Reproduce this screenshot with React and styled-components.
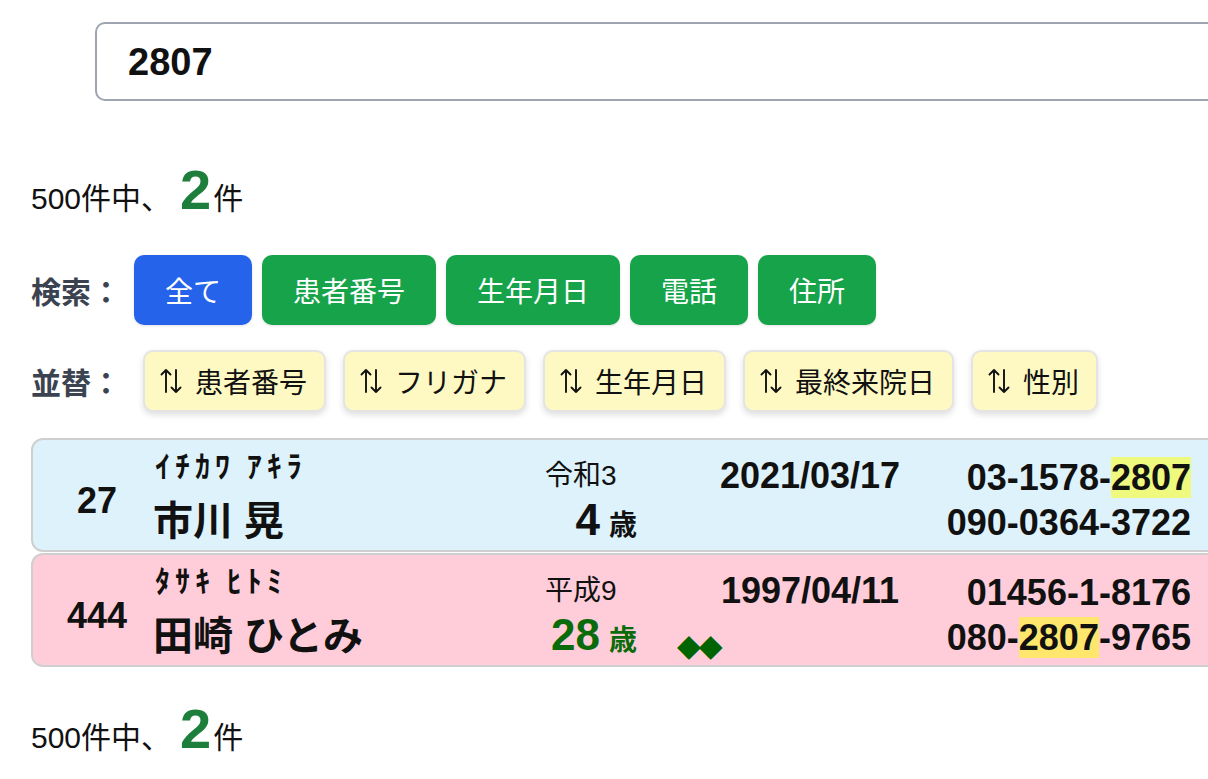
import React, { useEffect, useRef } from 'react';
import styled, { createGlobalStyle } from 'styled-components';

const GlobalStyle = createGlobalStyle`
  html, body { margin: 0; padding: 0; background: #fff; overflow: hidden; }
  body { font-family: "Liberation Sans", "Noto Sans CJK JP", sans-serif; color: #111; }
`;

const Page = styled.div`
  width: 100%;
  overflow: clip;
  box-sizing: border-box;
  padding: 22px 0 0 31px;
`;

const SearchField = styled.input`
  display: block;
  box-sizing: border-box;
  margin-left: 64px;
  width: 1150px;
  height: 79px;
  border: 2px solid #9ea4b0;
  border-radius: 10px;
  padding: 2px 0 0 31px;
  font: 700 38px "Liberation Sans", sans-serif;
  color: #111;
  outline: none;
  caret-color: #000;
  background: #fff;
`;

const Count = styled.div`
  display: flex;
  align-items: baseline;
  margin-top: ${(p) => p.$top}px;
  font-family: "Liberation Sans", "Noto Sans CJK JP", sans-serif;
  font-size: 30px;
  line-height: 56px;
  color: #111;
`;

const CountNum = styled.span`
  font-size: 56px;
  font-weight: 700;
  color: #1e7e3c;
  margin: 0 2px 0 9px;
`;

const FilterRow = styled.div`
  display: flex;
  align-items: center;
  gap: ${(p) => p.$gap}px;
  margin-top: ${(p) => p.$top}px;
`;

const RowLabel = styled.span`
  width: ${(p) => p.$width}px;
  flex: none;
  font: 700 30px/40px "Noto Sans CJK JP", sans-serif;
  color: #3b4250;
`;

const FilterButton = styled.button`
  flex: none;
  font: 400 28px/40px "Noto Sans CJK JP", sans-serif;
  color: #fff;
  background: ${(p) => (p.$active ? '#2563eb' : '#16a34a')};
  border: none;
  border-radius: 10px;
  padding: 15px 31px;
  box-shadow: 0 1px 3px rgba(0, 0, 0, 0.12);
  cursor: pointer;
`;

const SortButton = styled.button`
  flex: none;
  display: flex;
  align-items: center;
  gap: 13px;
  font: 400 28px/40px "Noto Sans CJK JP", sans-serif;
  color: #111;
  background: #fef9c3;
  border: 2px solid #e4e4e4;
  border-radius: 10px;
  padding: 9px 17px 9px 15px;
  box-shadow: 0 3px 6px rgba(0, 0, 0, 0.13);
  cursor: pointer;
`;

const CardList = styled.div`
  display: flex;
  flex-direction: column;
  gap: 1px;
  width: 1200px;
  margin-top: 26px;
`;

const Card = styled.div`
  display: grid;
  grid-template-columns: 112px 392px 95px 300px 251px;
  grid-template-rows: 48px 50px;
  padding: 8px 38px 4px 8px;
  border: 2px solid #cfcfcf;
  border-radius: 12px;
  background: ${(p) => (p.$tone === 'pink' ? '#ffcdd9' : '#ddf2fa')};
  color: #111;
`;

const PatientId = styled.div`
  grid-row: 1 / span 2;
  grid-column: 1;
  align-self: center;
  text-align: center;
  padding-top: 8px;
  font: 700 36px/40px "Liberation Sans", sans-serif;
`;

const Kana = styled.div`
  grid-row: 1;
  grid-column: 2;
  align-self: start;
  padding-left: 2px;
  margin-top: -3px;
  font: 700 30px/38px "Noto Sans CJK JP", sans-serif;
  letter-spacing: 5px;
`;

const Name = styled.div`
  grid-row: 2;
  grid-column: 2;
  align-self: center;
  font: 700 40px/50px "Liberation Sans", "Noto Sans CJK JP", sans-serif;
`;

const Era = styled.div`
  grid-row: 1;
  grid-column: 3;
  align-self: end;
  font: 400 28px/40px "Liberation Sans", "Noto Sans CJK JP", sans-serif;
`;

const Age = styled.div`
  grid-row: 2;
  grid-column: 3;
  align-self: center;
  text-align: right;
  padding: 8px 3px 0 0;
  color: ${(p) => p.$color};
  font-family: "Liberation Sans", "Noto Sans CJK JP", sans-serif;
  font-weight: 700;
  line-height: 50px;
`;

const AgeNum = styled.span`
  font-size: 44px;
`;

const AgeUnit = styled.span`
  font-size: 28px;
  margin-left: 9px;
`;

const BirthDate = styled.div`
  grid-row: 1;
  grid-column: 4;
  align-self: end;
  padding-left: 40px;
  text-align: center;
  font: 700 36px/40px "Liberation Sans", sans-serif;
`;

const Marks = styled.div`
  grid-row: 2;
  grid-column: 4;
  align-self: end;
  margin-bottom: -4px;
  padding-left: 37px;
  color: #006400;
  font: 400 31px/40px "DejaVu Sans", sans-serif;
  letter-spacing: -2px;
`;

const Phone = styled.div`
  grid-row: ${(p) => p.$row};
  grid-column: 5;
  align-self: ${(p) => (p.$row === 1 ? 'end' : 'center')};
  margin-bottom: ${(p) => (p.$row === 1 ? -3 : 0)}px;
  padding-top: ${(p) => (p.$row === 1 ? 0 : 3)}px;
  text-align: right;
  white-space: nowrap;
  font: 700 36px/42px "Liberation Sans", sans-serif;
`;

const Hit = styled.mark`
  background: rgba(255, 255, 0, 0.5);
  color: inherit;
  padding: 0;
`;

const SortIcon = () => (
  <svg width="22" height="26" viewBox="0 0 22 26" fill="none" stroke="#111" strokeWidth="1.9" strokeLinecap="round" strokeLinejoin="round">
    <path d="M6 24V2M1.5 6.5L6 2l4.5 4.5" />
    <path d="M16 2v22M11.5 19.5L16 24l4.5-4.5" />
  </svg>
);

const QUERY = '2807';

function Highlight({ text }) {
  const i = text.indexOf(QUERY);
  if (i < 0) return text;
  return (
    <>
      {text.slice(0, i)}
      <Hit>{QUERY}</Hit>
      {text.slice(i + QUERY.length)}
    </>
  );
}

const patients = [
  {
    id: '27', kana: 'ｲﾁｶﾜ ｱｷﾗ', name: '市川 晃', era: '令和3', age: '4',
    ageColor: '#111', date: '2021/03/17', phones: ['03-1578-2807', '090-0364-3722'],
    tone: 'blue', marks: '',
  },
  {
    id: '444', kana: 'ﾀｻｷ ﾋﾄﾐ', name: '田崎 ひとみ', era: '平成9', age: '28',
    ageColor: '#0a6b0a', date: '1997/04/11', phones: ['01456-1-8176', '080-2807-9765'],
    tone: 'pink', marks: '◆◆',
  },
];

const searchTargets = ['全て', '患者番号', '生年月日', '電話', '住所'];
const sortKeys = ['患者番号', 'フリガナ', '生年月日', '最終来院日', '性別'];

function ResultCount({ top }) {
  return (
    <Count $top={top}>
      500件中、<CountNum>2</CountNum>件
    </Count>
  );
}

export default function App() {
  const inputRef = useRef(null);
  useEffect(() => {
    const el = inputRef.current;
    if (el) {
      el.focus({ preventScroll: true });
      el.setSelectionRange(el.value.length, el.value.length);
    }
  }, []);
  return (
    <Page>
      <GlobalStyle />
      <SearchField ref={inputRef} defaultValue="2807" />
      <ResultCount top={61} />
      <FilterRow $gap={10} $top={28}>
        <RowLabel $width={93}>検索：</RowLabel>
        {searchTargets.map((t, i) => (
          <FilterButton key={t} $active={i === 0}>{t}</FilterButton>
        ))}
      </FilterRow>
      <FilterRow $gap={17} $top={25}>
        <RowLabel $width={95}>並替：</RowLabel>
        {sortKeys.map((k) => (
          <SortButton key={k}>
            <SortIcon />
            {k}
          </SortButton>
        ))}
      </FilterRow>
      <CardList>
        {patients.map((p) => (
          <Card key={p.id} $tone={p.tone}>
            <PatientId>{p.id}</PatientId>
            <Kana>{p.kana}</Kana>
            <Name>{p.name}</Name>
            <Era>{p.era}</Era>
            <Age $color={p.ageColor}>
              <AgeNum>{p.age}</AgeNum>
              <AgeUnit>歳</AgeUnit>
            </Age>
            <BirthDate>{p.date}</BirthDate>
            {p.marks && <Marks>{p.marks}</Marks>}
            <Phone $row={1}><Highlight text={p.phones[0]} /></Phone>
            <Phone $row={2}><Highlight text={p.phones[1]} /></Phone>
          </Card>
        ))}
      </CardList>
      <ResultCount top={34} />
    </Page>
  );
}
